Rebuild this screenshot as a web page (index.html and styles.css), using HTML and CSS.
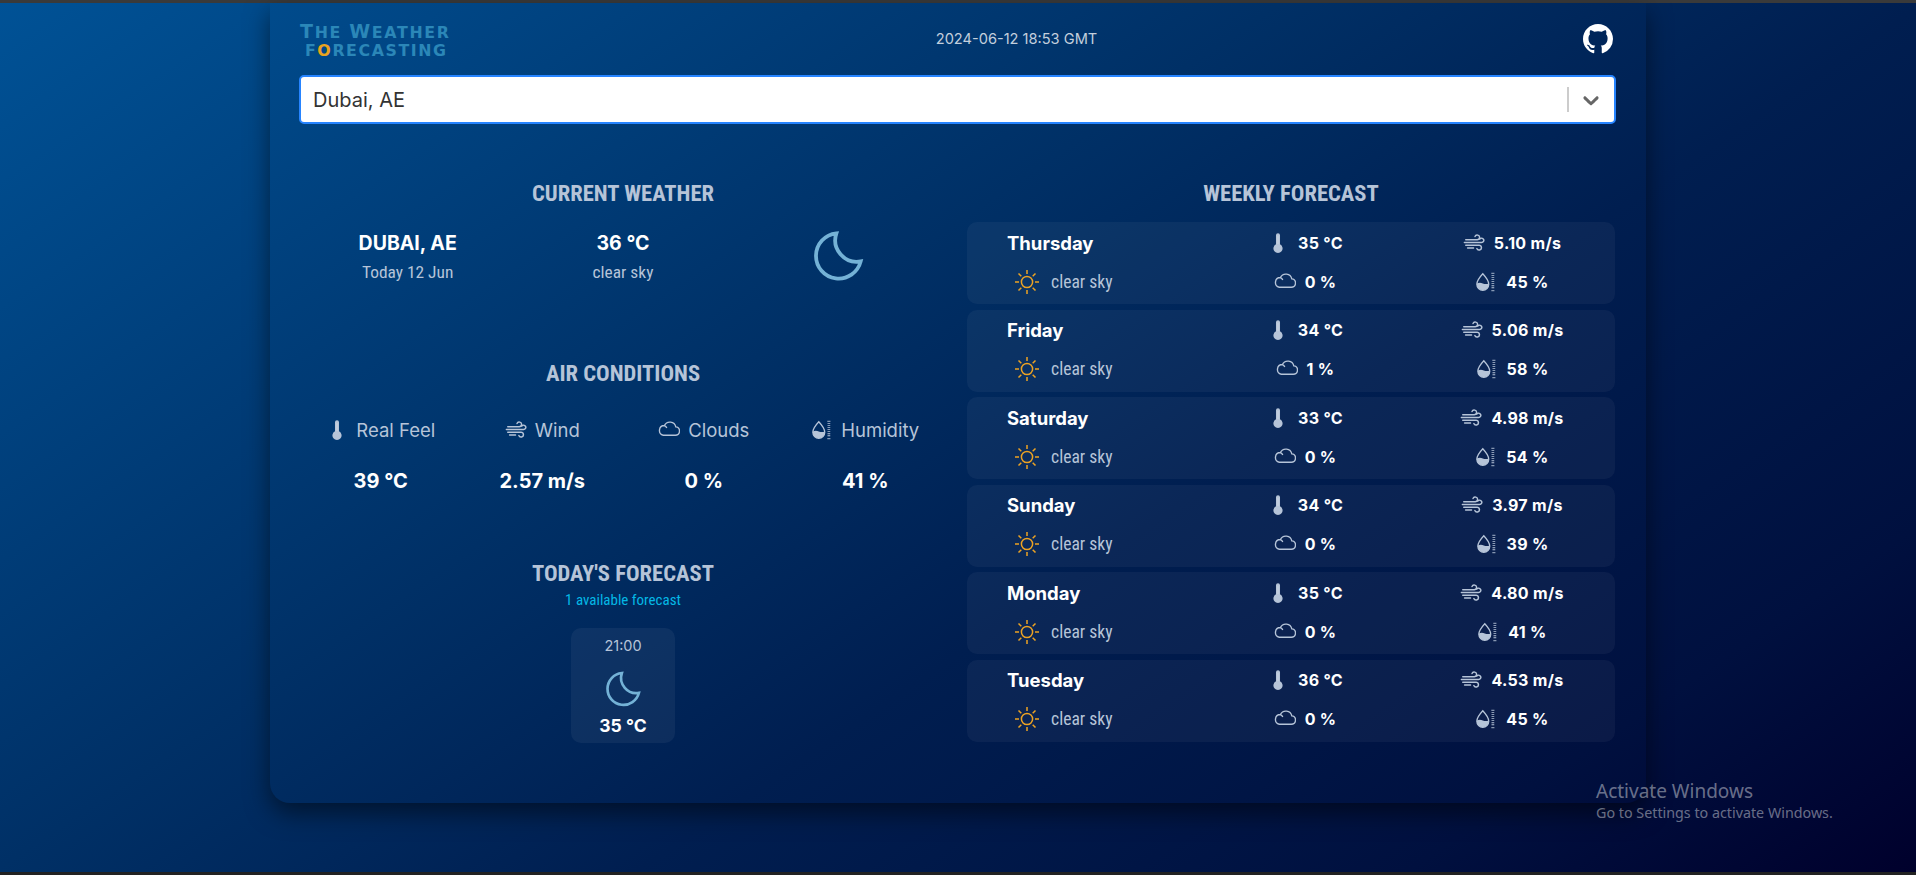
FILE: index.html
```html
<!DOCTYPE html>
<html lang="en">
<head>
    <meta charset="UTF-8">
    <meta name="viewport" content="width=device-width, initial-scale=1.0">
    <title>The Weather Forecasting</title>
    <link rel="stylesheet" href="styles.css">
</head>
<body>
    <svg class="icon-defs" xmlns="http://www.w3.org/2000/svg">
        <symbol id="i-moon" viewBox="0 0 100 100">
            <path d="M47 8A42 42 0 1 0 92 60A40 40 0 0 1 47 8Z" fill="none" stroke="currentColor" stroke-width="7"/>
        </symbol>
        <symbol id="i-therm" viewBox="0 0 24 24">
            <path d="M9.800 3.600a2.200 2.200 0 0 1 4.400 0V13.400a5 5 0 1 1-4.400 0Z" fill="currentColor"/>
            <path d="M11.300 4v9h1.400V4Z" fill="#fff" opacity=".25"/>
        </symbol>
        <symbol id="i-wind" viewBox="0 0 24 24">
            <path d="M3 8.500h12.500a2.600 2.600 0 1 0-2.400-3.600M1.500 11.500h18.800a2.400 2.400 0 1 0-2-3.700M3 14.500h14.500a2.600 2.600 0 1 1-2.400 3.600M5 17.500h6.500" fill="none" stroke="currentColor" stroke-width="1.600" stroke-linecap="round"/>
        </symbol>
        <symbol id="i-cloud" viewBox="1.500 3 21 21">
            <path d="M6.500 18.500h11.500a4 4 0 0 0 .5-7.970 5.800 5.800 0 0 0-10.900-1.300A4.700 4.700 0 0 0 6.500 18.500ZM7.600 9.230a4.700 4.700 0 0 1 2.300 2.300" fill="none" stroke="currentColor" stroke-width="1.300"/>
        </symbol>
        <symbol id="i-drop" viewBox="0 0 24 24">
            <path d="M8.500 3C8.500 3 2 10 2 14.500a6.500 6.500 0 0 0 13 0C15 10 8.500 3 8.500 3Z" fill="none" stroke="currentColor" stroke-width="1.400"/>
            <path d="M2 13.500q3.200-1.500 6.500 0t6.500 0v1a6.500 6.500 0 0 1-13 0Z" fill="currentColor"/>
            <path d="M17.800 2.500h3.400M17.800 21.500h3.400" stroke="currentColor" stroke-width="1"/>
            <path d="M19.500 4.500V20" stroke="currentColor" stroke-width="3" stroke-dasharray="1 1.200"/>
        </symbol>
        <symbol id="i-sun" viewBox="0 0 26 26">
            <circle cx="13" cy="13" r="5.600" fill="none" stroke="currentColor" stroke-width="1.500"/>
            <path d="M13 1v4M13 21v4M1 13h4M21 13h4M4.500 4.500l2.800 2.800M18.700 18.700l2.800 2.800M4.500 21.500l2.800-2.800M18.700 7.300l2.800-2.800" stroke="currentColor" stroke-width="1.500"/>
        </symbol>
    </svg>

    <div class="topbar"></div>
    <main class="page">
        <header class="header">
            <svg class="logo" viewBox="0 0 150 36">
                <text class="logo-text" x="0" y="16.800" textLength="149"><tspan class="logo-cap">T</tspan>HE <tspan class="logo-cap">W</tspan>EATHER</text>
                <text class="logo-text" x="5" y="35.300" textLength="141">F<tspan class="logo-o">O</tspan>RECASTING</text>
            </svg>
            <div class="clock">2024-06-12 18:53 GMT</div>
            <svg class="github" viewBox="0 0 16 16"><path fill="#fff" d="M8 0C3.580 0 0 3.580 0 8c0 3.540 2.290 6.530 5.470 7.590.4.070.55-.17.55-.38 0-.19-.01-.82-.01-1.490-2.010.37-2.530-.49-2.690-.94-.09-.23-.48-.94-.82-1.130-.28-.15-.68-.52-.01-.53.63-.01 1.080.58 1.230.82.72 1.210 1.870.87 2.330.66.07-.52.28-.87.51-1.070-1.780-.2-3.640-.89-3.640-3.950 0-.87.31-1.590.82-2.150-.08-.2-.36-1.020.08-2.120 0 0 .67-.21 2.200.82.64-.18 1.320-.27 2-.27.68 0 1.360.09 2 .27 1.530-1.040 2.200-.82 2.200-.82.44 1.100.16 1.920.08 2.120.51.56.82 1.270.82 2.150 0 3.070-1.870 3.750-3.650 3.950.29.25.54.73.54 1.480 0 1.070-.01 1.930-.01 2.200 0 .21.15.46.55.38A8.013 8.013 0 0 0 16 8c0-4.420-3.580-8-8-8Z"/></svg>
        </header>

        <div class="search">
            <span class="search-value">Dubai, AE</span>
            <span class="search-sep"></span>
            <svg class="search-arrow" viewBox="0 0 20 20"><path fill="#666" d="M4.516 7.548c.436-.446 1.043-.481 1.576 0L10 11.295l3.908-3.747c.533-.481 1.141-.446 1.574 0 .436.445.408 1.197 0 1.615-.406.418-4.695 4.502-4.695 4.502a1.095 1.095 0 0 1-1.576 0S4.924 9.581 4.516 9.163s-.436-1.170 0-1.615Z"/></svg>
        </div>

        <div class="columns">
            <section class="col">
                <h2 class="title">Current Weather</h2>
                <div class="current">
                    <div class="current-cell">
                        <div class="big">DUBAI, AE</div>
                        <div class="sub">Today 12 Jun</div>
                    </div>
                    <div class="current-cell">
                        <div class="big">36 °C</div>
                        <div class="sub">clear sky</div>
                    </div>
                    <div class="current-cell">
                        <svg class="moon"><use href="#i-moon"/></svg>
                    </div>
                </div>

                <h2 class="title air-title">Air Conditions</h2>
                <div class="air">
                    <div class="air-cell">
                        <div class="air-label"><svg class="ic"><use href="#i-therm"/></svg>Real Feel</div>
                        <div class="air-value">39 °C</div>
                    </div>
                    <div class="air-cell">
                        <div class="air-label"><svg class="ic"><use href="#i-wind"/></svg>Wind</div>
                        <div class="air-value">2.57 m/s</div>
                    </div>
                    <div class="air-cell">
                        <div class="air-label"><svg class="ic"><use href="#i-cloud"/></svg>Clouds</div>
                        <div class="air-value">0 %</div>
                    </div>
                    <div class="air-cell">
                        <div class="air-label"><svg class="ic"><use href="#i-drop"/></svg>Humidity</div>
                        <div class="air-value">41 %</div>
                    </div>
                </div>

                <h2 class="title today-title">Today's Forecast</h2>
                <div class="today-sub">1 available forecast</div>
                <div class="hour-card">
                    <div class="hour-time">21:00</div>
                    <svg class="hour-moon"><use href="#i-moon"/></svg>
                    <div class="hour-temp">35 °C</div>
                </div>
            </section>

            <section class="col">
                <h2 class="title">Weekly Forecast</h2>
                <div class="week">
                    <div class="day">
                        <div class="day-name">Thursday</div>
                        <div class="stat"><svg class="ic"><use href="#i-therm"/></svg>35 °C</div>
                        <div class="stat"><svg class="ic"><use href="#i-wind"/></svg>5.10 m/s</div>
                        <div class="day-sky"><svg class="sun"><use href="#i-sun"/></svg>clear sky</div>
                        <div class="stat"><svg class="ic"><use href="#i-cloud"/></svg>0 %</div>
                        <div class="stat"><svg class="ic"><use href="#i-drop"/></svg>45 %</div>
                    </div>
                    <div class="day">
                        <div class="day-name">Friday</div>
                        <div class="stat"><svg class="ic"><use href="#i-therm"/></svg>34 °C</div>
                        <div class="stat"><svg class="ic"><use href="#i-wind"/></svg>5.06 m/s</div>
                        <div class="day-sky"><svg class="sun"><use href="#i-sun"/></svg>clear sky</div>
                        <div class="stat"><svg class="ic"><use href="#i-cloud"/></svg>1 %</div>
                        <div class="stat"><svg class="ic"><use href="#i-drop"/></svg>58 %</div>
                    </div>
                    <div class="day">
                        <div class="day-name">Saturday</div>
                        <div class="stat"><svg class="ic"><use href="#i-therm"/></svg>33 °C</div>
                        <div class="stat"><svg class="ic"><use href="#i-wind"/></svg>4.98 m/s</div>
                        <div class="day-sky"><svg class="sun"><use href="#i-sun"/></svg>clear sky</div>
                        <div class="stat"><svg class="ic"><use href="#i-cloud"/></svg>0 %</div>
                        <div class="stat"><svg class="ic"><use href="#i-drop"/></svg>54 %</div>
                    </div>
                    <div class="day">
                        <div class="day-name">Sunday</div>
                        <div class="stat"><svg class="ic"><use href="#i-therm"/></svg>34 °C</div>
                        <div class="stat"><svg class="ic"><use href="#i-wind"/></svg>3.97 m/s</div>
                        <div class="day-sky"><svg class="sun"><use href="#i-sun"/></svg>clear sky</div>
                        <div class="stat"><svg class="ic"><use href="#i-cloud"/></svg>0 %</div>
                        <div class="stat"><svg class="ic"><use href="#i-drop"/></svg>39 %</div>
                    </div>
                    <div class="day">
                        <div class="day-name">Monday</div>
                        <div class="stat"><svg class="ic"><use href="#i-therm"/></svg>35 °C</div>
                        <div class="stat"><svg class="ic"><use href="#i-wind"/></svg>4.80 m/s</div>
                        <div class="day-sky"><svg class="sun"><use href="#i-sun"/></svg>clear sky</div>
                        <div class="stat"><svg class="ic"><use href="#i-cloud"/></svg>0 %</div>
                        <div class="stat"><svg class="ic"><use href="#i-drop"/></svg>41 %</div>
                    </div>
                    <div class="day">
                        <div class="day-name">Tuesday</div>
                        <div class="stat"><svg class="ic"><use href="#i-therm"/></svg>36 °C</div>
                        <div class="stat"><svg class="ic"><use href="#i-wind"/></svg>4.53 m/s</div>
                        <div class="day-sky"><svg class="sun"><use href="#i-sun"/></svg>clear sky</div>
                        <div class="stat"><svg class="ic"><use href="#i-cloud"/></svg>0 %</div>
                        <div class="stat"><svg class="ic"><use href="#i-drop"/></svg>45 %</div>
                    </div>
                </div>
            </section>
        </div>
    </main>

    <div class="activate">
        <div class="activate-big">Activate Windows</div>
        <div class="activate-small">Go to Settings to activate Windows.</div>
    </div>
    <div class="bottombar"></div>
</body>
</html>
```

FILE: styles.css
```css
* {
    box-sizing: border-box;
}

html, body {
    height: 875px;
    margin: 0;
    overflow: hidden;
}

body {
    position: relative;
    font-family: Inter, "Noto Sans", sans-serif;
    color: #fff;
    background: linear-gradient(146deg, #005296 0%, #003066 40%, #001e50 60%, #00103f 84%, #00002c 100%);
}

.icon-defs {
    display: none;
}

.topbar {
    height: 3px;
    background: #3a3a3a;
}

.bottombar {
    position: absolute;
    left: 0;
    right: 0;
    bottom: 0;
    height: 3px;
    background: #222;
}

.page {
    width: 1376px;
    margin-left: 270px;
    padding: 16px 30px 60px;
    border-radius: 0 0 20px 20px;
    box-shadow: 0 10px 24px rgba(0, 0, 0, .5);
}

/* header */
.header {
    display: flex;
    justify-content: space-between;
    align-items: center;
    height: 40px;
    margin-bottom: 16px;
}

.logo {
    width: 150px;
    height: 36px;
    overflow: visible;
}

.logo-text {
    font-family: "DejaVu Sans", sans-serif;
    font-weight: 700;
    font-size: 15.800px;
    fill: #2b87b8;
}

.logo-cap {
    font-size: 19px;
}

.logo-o {
    fill: #e8a31f;
}

.clock {
    font-size: 14.600px;
    color: #c3cfdd;
}

.github {
    width: 30px;
    height: 30px;
    margin-right: 3px;
}

/* search */
.search {
    display: flex;
    align-items: center;
    height: 49px;
    margin: 0 0 51px -1px;
    padding: 0 10px 0 12px;
    background: #fff;
    border: 2px solid #2684ff;
    border-radius: 5px;
}

.search-value {
    flex: 1;
    font-size: 20px;
    color: #333;
}

.search-sep {
    width: 2px;
    height: 25px;
    background: #ccc;
}

.search-arrow {
    width: 26px;
    height: 26px;
    margin-left: 9px;
}

/* columns */
.columns {
    display: grid;
    grid-template-columns: 646px 648px;
    column-gap: 21px;
}

.title {
    margin: 0;
    font-family: Roboto, "Liberation Sans", sans-serif;
    font-stretch: condensed;
    font-size: 22.600px;
    font-weight: 700;
    line-height: 38px;
    text-align: center;
    text-transform: uppercase;
    color: #b6c4d8;
}

.current {
    display: grid;
    grid-template-columns: repeat(3, 1fr);
    align-items: center;
    margin-top: 14px;
    text-align: center;
}

.big {
    font-size: 19.500px;
    font-weight: 700;
    line-height: 32px;
}

.sub {
    font-family: Roboto, "Liberation Sans", sans-serif;
    font-stretch: condensed;
    font-size: 17.400px;
    line-height: 26px;
    color: #b6c4d8;
}

.moon {
    display: block;
    width: 54px;
    height: 54px;
    margin: 0 auto;
    color: #74b2d6;
}

.air-title {
    margin-top: 70px;
}

.air {
    display: grid;
    grid-template-columns: repeat(4, 1fr);
    margin-top: 24px;
    text-align: center;
}

.air-label {
    display: flex;
    justify-content: center;
    align-items: center;
    gap: 8px;
    font-size: 18.500px;
    line-height: 26px;
    color: #b6c4d8;
}

.air-value {
    margin-top: 25px;
    font-size: 20px;
    font-weight: 700;
    line-height: 26px;
}

.ic {
    flex: none;
    width: 22px;
    height: 22px;
    color: #b6c4d8;
}

.today-title {
    margin-top: 61px;
}

.today-sub {
    margin-top: -1px;
    font-family: Roboto, "Liberation Sans", sans-serif;
    font-stretch: condensed;
    font-size: 15px;
    line-height: 16px;
    text-align: center;
    color: #04b8e6;
}

.hour-card {
    display: flex;
    flex-direction: column;
    align-items: center;
    width: 104px;
    height: 115px;
    margin: 20px auto 0;
    padding-top: 7px;
    border-radius: 10px;
    background: rgba(255, 255, 255, .05);
}

.hour-time {
    font-size: 14.500px;
    line-height: 22px;
    color: #b6c4d8;
}

.hour-moon {
    width: 38px;
    height: 38px;
    margin-top: 13px;
    color: #74b2d6;
}

.hour-temp {
    margin-top: 6px;
    font-size: 17.500px;
    font-weight: 700;
    line-height: 24px;
}

/* weekly */
.week {
    display: flex;
    flex-direction: column;
    gap: 5.600px;
    margin-top: 9px;
}

.day {
    display: grid;
    grid-template-columns: 191px 214px 200px;
    grid-auto-rows: 39px;
    align-content: center;
    align-items: center;
    height: 82px;
    padding: 0 0 2px 40px;
    border-radius: 10px;
    background: rgba(255, 255, 255, .045);
}

.day-name {
    font-size: 18.500px;
    font-weight: 700;
}

.day-sky {
    display: flex;
    align-items: center;
    gap: 11px;
    padding-left: 7px;
    font-family: Roboto, "Liberation Sans", sans-serif;
    font-stretch: condensed;
    font-size: 17.600px;
    color: #b6c4d8;
}

.sun {
    width: 26px;
    height: 26px;
    color: #eda323;
}

.stat {
    display: flex;
    justify-content: center;
    align-items: center;
    gap: 9px;
    font-size: 16px;
    font-weight: 700;
    letter-spacing: .3px;
}

/* windows watermark */
.activate {
    position: absolute;
    left: 1596px;
    top: 779px;
    font-family: "Noto Sans", sans-serif;
    color: rgba(255, 255, 255, .42);
}

.activate-big {
    font-size: 19px;
    line-height: 24px;
}

.activate-small {
    font-size: 14.300px;
    line-height: 20px;
}
```
